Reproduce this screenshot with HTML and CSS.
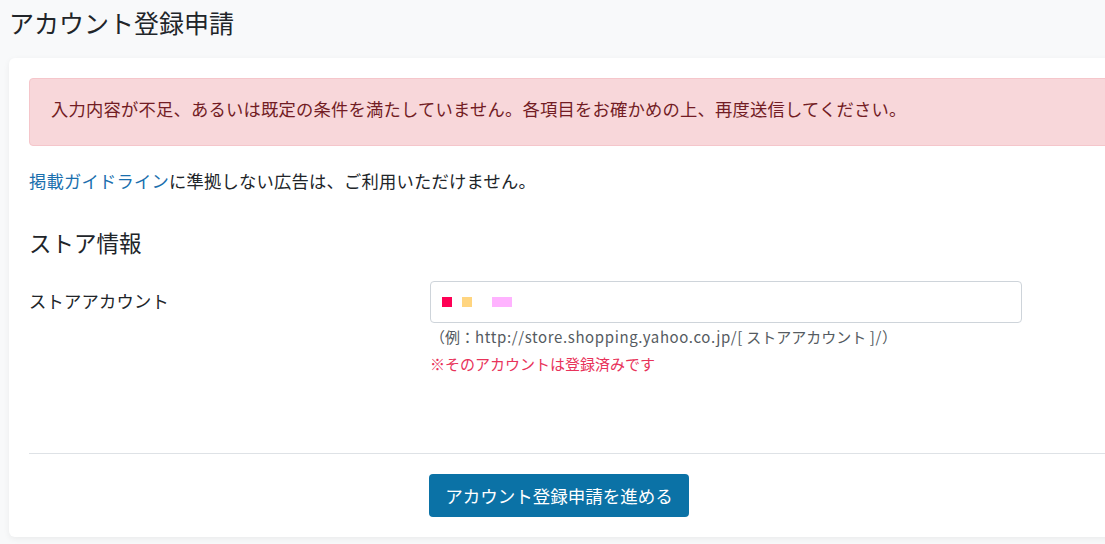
FILE: index.html
```html
<!DOCTYPE html>
<html lang="ja">
<head>
<meta charset="utf-8">
<title>アカウント登録申請</title>
<link rel="stylesheet" href="styles.css">
</head>
<body>
<h1 class="page-title">アカウント登録申請</h1>
<main class="card">
  <div class="alert">入力内容が不足、あるいは既定の条件を満たしていません。各項目をお確かめの上、再度送信してください。</div>
  <p class="note"><a class="link" href="#">掲載ガイドライン</a>に準拠しない広告は、ご利用いただけません。</p>
  <h2 class="section-title">ストア情報</h2>
  <div class="form-row">
    <label class="form-label">ストアアカウント</label>
    <div class="form-field">
      <div class="input"><span class="mask mask-red"></span><span class="mask mask-yellow"></span><span class="mask mask-pink"></span></div>
      <p class="hint">（例：<span class="latin">http://store.shopping.yahoo.co.jp/[</span> ストアアカウント <span class="latin">]/</span>）</p>
      <p class="error">※そのアカウントは登録済みです</p>
    </div>
  </div>
  <hr class="divider">
  <div class="actions"><button class="btn" type="button">アカウント登録申請を進める</button></div>
</main>
</body>
</html>
```

FILE: styles.css
```css
html, body {
  margin: 0;
  padding: 0;
}
body {
  background: #f8f9fa;
  font-family: "Noto Sans CJK JP", "Noto Sans", sans-serif;
  font-size: 17.3px;
  line-height: 1.5;
  letter-spacing: 0.22px;
  color: #212529;
  overflow: hidden;
  width: 1105px;
  height: 544px;
}
.page-title {
  margin: 0;
  padding-left: 9px;
  font-size: 25px;
  font-weight: 400;
  line-height: 44px;
  letter-spacing: 0;
  color: #212529;
}
.card {
  margin: 14px 0 0 9px;
  width: 1200px;
  box-sizing: border-box;
  background: #fff;
  border-radius: 6px;
  box-shadow: 0 2px 6px rgba(0,0,0,0.06);
  padding: 20px;
}
.alert {
  background: #f8d7da;
  border: 1px solid #f5c6cb;
  border-radius: 4px;
  color: #721c24;
  padding: 17px 21px 23px;
  line-height: 25.5px;
}
.note {
  margin: 22px 0 0 0;
  line-height: 25.5px;
}
.link {
  color: #1a6fae;
  text-decoration: none;
}
.section-title {
  margin: 36px 0 0 0;
  font-size: 22.5px;
  font-weight: 400;
  line-height: 26px;
  letter-spacing: 0;
}
.form-row {
  display: grid;
  grid-template-columns: 401px 592px;
  margin-top: 26px;
}
.form-label {
  padding-top: 7px;
  line-height: 25.5px;
}
.input {
  height: 42px;
  box-sizing: border-box;
  border: 1px solid #ced4da;
  border-radius: 4px;
  display: flex;
  align-items: center;
  padding-left: 11px;
  gap: 10px;
}
.mask {
  display: inline-block;
  height: 10px;
  width: 10px;
}
.mask-red { background: #ff0055; }
.mask-yellow { background: #ffd580; }
.mask-pink { background: #ffb3ff; width: 20px; margin-left: 10px; }
.hint {
  margin: 3px 0 0 0;
  font-size: 15px;
  line-height: 22px;
  letter-spacing: 0;
  color: #555b61;
  white-space: nowrap;
}
.latin {
  letter-spacing: 0.62px;
}
.error {
  margin: 5px 0 0 0;
  font-size: 15px;
  line-height: 22px;
  letter-spacing: 0;
  color: #e8335a;
}
.divider {
  margin: 78px 0 0 0;
  border: 0;
  border-top: 1px solid #dee2e6;
}
.actions {
  width: 1060px;
  display: flex;
  justify-content: center;
  margin-top: 20px;
}
.btn {
  width: 260px;
  height: 43px;
  background: #0b72a6;
  color: #fff;
  border: 0;
  border-radius: 4px;
  font-family: inherit;
  font-size: 17.5px;
  letter-spacing: 0;
  padding: 0 0 1px;
}
```
